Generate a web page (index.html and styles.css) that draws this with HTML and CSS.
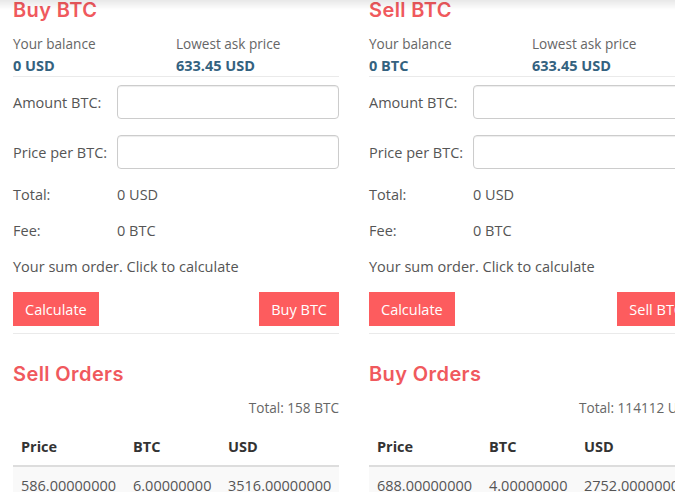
FILE: index.html
```html
<!DOCTYPE html>
<html>
<head>
<meta charset="utf-8">
<link rel="stylesheet" href="styles.css">
</head>
<body>
<div class="topshadow"></div>
<div class="page">
  <section class="col">
    <h2 class="title">Buy BTC</h2>
    <div class="stats">
      <div class="stat"><div class="stat-label">Your balance</div><div class="stat-value">0 USD</div></div>
      <div class="stat"><div class="stat-label">Lowest ask price</div><div class="stat-value">633.45 USD</div></div>
    </div>
    <div class="rule"></div>
    <div class="field"><label class="field-label">Amount BTC:</label><input class="field-input" type="text"></div>
    <div class="field"><label class="field-label">Price per BTC:</label><input class="field-input" type="text"></div>
    <div class="info"><span class="info-label">Total:</span><span>0 USD</span></div>
    <div class="info"><span class="info-label">Fee:</span><span>0 BTC</span></div>
    <div class="info">Your sum order. Click to calculate</div>
    <div class="actions"><button class="btn">Calculate</button><button class="btn">Buy BTC</button></div>
    <div class="rule rule-actions"></div>
    <h2 class="title orders-title">Sell Orders</h2>
    <div class="total">Total: 158 BTC</div>
    <table class="orders">
      <colgroup><col class="c1"><col class="c2"><col></colgroup>
      <thead><tr><th>Price</th><th>BTC</th><th>USD</th></tr></thead>
      <tbody><tr><td>586.00000000</td><td>6.00000000</td><td>3516.00000000</td></tr></tbody>
    </table>
  </section>
  <section class="col">
    <h2 class="title">Sell BTC</h2>
    <div class="stats">
      <div class="stat"><div class="stat-label">Your balance</div><div class="stat-value">0 BTC</div></div>
      <div class="stat"><div class="stat-label">Lowest ask price</div><div class="stat-value">633.45 USD</div></div>
    </div>
    <div class="rule"></div>
    <div class="field"><label class="field-label">Amount BTC:</label><input class="field-input" type="text"></div>
    <div class="field"><label class="field-label">Price per BTC:</label><input class="field-input" type="text"></div>
    <div class="info"><span class="info-label">Total:</span><span>0 USD</span></div>
    <div class="info"><span class="info-label">Fee:</span><span>0 BTC</span></div>
    <div class="info">Your sum order. Click to calculate</div>
    <div class="actions"><button class="btn">Calculate</button><button class="btn">Sell BTC</button></div>
    <div class="rule rule-actions"></div>
    <h2 class="title orders-title">Buy Orders</h2>
    <div class="total">Total: 114112 USD</div>
    <table class="orders">
      <colgroup><col class="c1"><col class="c2"><col></colgroup>
      <thead><tr><th>Price</th><th>BTC</th><th>USD</th></tr></thead>
      <tbody><tr><td>688.00000000</td><td>4.00000000</td><td>2752.00000000</td></tr></tbody>
    </table>
  </section>
</div>
</body>
</html>
```
FILE: styles.css
```css
html, body {
  margin: 0;
  padding: 0;
  background: #fff;
  overflow: hidden;
}
body {
  font-family: "Open Sans", "Liberation Sans", sans-serif;
  font-size: 14.5px;
  color: #555;
  width: 675px;
  height: 492px;
}
.topshadow {
  position: fixed;
  top: 0;
  left: 0;
  right: 0;
  height: 10px;
  background: linear-gradient(rgba(0,0,0,0.09), rgba(0,0,0,0));
  pointer-events: none;
  z-index: 5;
}
.page {
  display: flex;
  gap: 30px;
  padding-left: 13px;
  width: 682px;
}
.col {
  flex: 0 0 326px;
  width: 326px;
}
.title {
  margin: 0;
  font-family: "Inter", "Open Sans", sans-serif;
  font-weight: 600;
  font-size: 20px;
  line-height: 20px;
  color: #f0595d;
  letter-spacing: 0.4px;
}
.stats {
  display: grid;
  grid-template-columns: 163px 163px;
  margin-top: 13px;
}
.stat-label {
  font-size: 13.6px;
  line-height: 22px;
  color: #666;
}
.stat-value {
  font-size: 14.5px;
  line-height: 20px;
  padding-top: 1px;
  font-weight: 700;
  color: #34627f;
}
.rule {
  height: 1px;
  background: #eaeaea;
}
.field {
  display: flex;
  align-items: center;
  margin-top: 8px;
}
.field + .field {
  margin-top: 16px;
}
.field-label {
  flex: 0 0 104px;
  font-size: 14.5px;
}
.field-input {
  flex: 1;
  min-width: 0;
  height: 34px;
  box-sizing: border-box;
  border: 1px solid #ccc;
  border-radius: 4px;
  box-shadow: inset 0 1px 1px rgba(0,0,0,0.075);
  padding: 6px 12px;
  font: inherit;
  margin: 0;
}
.info {
  display: flex;
  line-height: 20px;
  margin-top: 16px;
}
.field + .info {
  margin-top: 16px;
}
.info-label {
  flex: 0 0 104px;
}
.actions {
  display: flex;
  justify-content: space-between;
  margin-top: 15px;
}
.btn {
  height: 34px;
  border: 0;
  border-radius: 0;
  background: #fd5c5e;
  color: #fff;
  font-family: "Open Sans", "Liberation Sans", sans-serif;
  font-size: 14.5px;
  padding: 0 12px;
  margin: 0;
}
.rule-actions {
  margin-top: 7px;
}
.orders-title {
  margin-top: 30px;
}
.total {
  text-align: right;
  font-size: 13.6px;
  line-height: 20px;
  margin-top: 14px;
  color: #666;
}
.orders {
  width: 100%;
  table-layout: fixed;
  border-collapse: collapse;
  margin-top: 11px;
  white-space: nowrap;
}
.orders .c1 { width: 112px; }
.orders .c2 { width: 95px; }
.orders th {
  text-align: left;
  font-weight: 700;
  color: #333;
  padding: 8px;
  line-height: 20px;
  border-bottom: 2px solid #ddd;
}
.orders td {
  padding: 9px 8px 7px;
  line-height: 20px;
  color: #555;
  background: #f9f9f9;
  overflow: hidden;
}
```
